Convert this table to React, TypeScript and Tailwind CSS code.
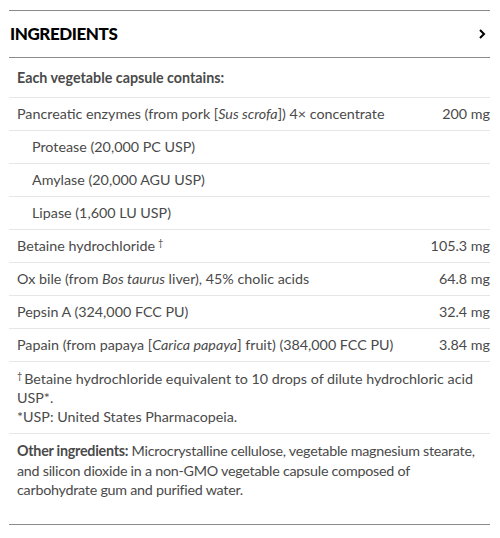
const Dagger = ({ className = '' }: { className?: string }) => (
  <span className={`relative -top-[5px] text-[9px] leading-none ${className}`}>†</span>
);

const rows: { name: React.ReactNode; amount?: string; indent?: boolean }[] = [
  {
    name: (
      <>
        Pancreatic enzymes (from pork [<i>Sus scrofa</i>]) 4× concentrate
      </>
    ),
    amount: '200 mg',
  },
  { name: 'Protease (20,000 PC USP)', indent: true },
  { name: 'Amylase (20,000 AGU USP)', indent: true },
  { name: 'Lipase (1,600 LU USP)', indent: true },
  {
    name: (
      <>
        Betaine hydrochloride
        <Dagger className="ml-[3px]" />
      </>
    ),
    amount: '105.3 mg',
  },
  {
    name: (
      <>
        Ox bile (from <i>Bos taurus</i> liver), 45% cholic acids
      </>
    ),
    amount: '64.8 mg',
  },
  { name: 'Pepsin A (324,000 FCC PU)', amount: '32.4 mg' },
  {
    name: (
      <>
        Papain (from papaya [<i>Carica papaya</i>] fruit) (384,000 FCC PU)
      </>
    ),
    amount: '3.84 mg',
  },
];

export default function App() {
  return (
    <main className="min-h-[538px] bg-white pt-[10px] pl-[9px] pr-[10px] font-['Lato',sans-serif] text-[14.3px] text-[#4a4a4a]">
      <div className="border-t border-[#8a8a8a]">
        <div className="flex h-[47px] items-center justify-between border-b border-[#8a8a8a] pl-[1px] pr-[2px]">
          <h2 className="text-[17px] font-black tracking-tight text-black">INGREDIENTS</h2>
          <svg className="h-3 w-3" viewBox="0 0 12 12" fill="none" stroke="black" strokeWidth={2}>
            <path d="M4 2l4 4-4 4" />
          </svg>
        </div>

        <div className="flex h-[40px] items-center border-b border-[#e6e6e6] pl-2 font-bold">
          Each vegetable capsule contains:
        </div>

        {rows.map((r, i) => (
          <div
            key={i}
            className={`flex h-[33px] items-center justify-between border-b border-[#e6e6e6] ${r.indent ? 'pl-[23px]' : 'pl-2'}`}
          >
            <span>{r.name}</span>
            {r.amount && <span>{r.amount}</span>}
          </div>
        ))}

        <div className="border-b border-[#e6e6e6] py-[7px] pl-2 leading-[19px]">
          <p>
            <Dagger className="mr-[2px]" />
            Betaine hydrochloride equivalent to 10 drops of dilute hydrochloric acid USP*.
          </p>
          <p>*USP: United States Pharmacopeia.</p>
        </div>

        <div className="h-[91px] border-b border-[#8a8a8a] pt-[7px] pl-2 leading-[19.5px] tracking-[-0.25px]">
          <span className="font-bold">Other ingredients:</span> Microcrystalline cellulose, vegetable magnesium stearate,
          and silicon dioxide in a non-GMO vegetable capsule composed of carbohydrate gum and purified water.
        </div>
      </div>
    </main>
  );
}
